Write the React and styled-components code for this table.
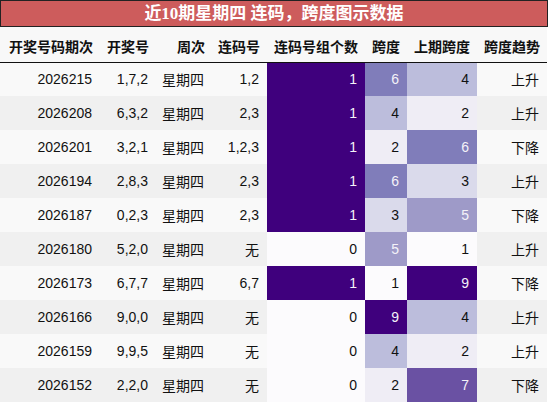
import React from "react";
import styled, { createGlobalStyle } from "styled-components";

const GlobalStyle = createGlobalStyle`
  html, body { margin: 0; padding: 0; background: #ffffff; }
  body { font-family: "Liberation Sans", "Noto Sans CJK SC", sans-serif; }
`;

const PURPLES = ["#fcfbfd", "#efedf5", "#dadaeb", "#bcbddc", "#9e9ac8", "#807dba", "#6a51a3", "#54278f", "#3f007d"];

const spanColor = (v) => PURPLES[Math.max(0, Math.min(8, v - 1))];
const spanText = (v) => (v >= 5 ? "#f4f2f8" : "#111");

const Wrapper = styled.div`
  width: 548px;
  display: flex;
  flex-direction: column;
`;

const Title = styled.div`
  height: 25px;
  border: 1px solid #222;
  background: #cd5c5c;
  color: #ffffff;
  font-family: "Liberation Serif", "Noto Sans CJK SC", serif;
  font-weight: bold;
  font-size: 17px;
  display: flex;
  align-items: center;
  justify-content: center;
  line-height: 1;
`;

const Table = styled.table`
  width: 547px;
  border-collapse: collapse;
  border-spacing: 0;
  table-layout: fixed;
  font-size: 14px;
  color: #111;
`;

const HeadCell = styled.th`
  height: 35px;
  padding: 4px 7px 0 0;
  box-sizing: border-box;
  background: #f8f8f8;
  border-bottom: 1px solid #111;
  text-align: right;
  font-weight: bold;
  white-space: nowrap;
  color: #111;
`;

const Row = styled.tr`
  background: ${(p) => (p.$odd ? "#f9f9f9" : "#f0f0f0")};
`;

const Cell = styled.td`
  height: 34px;
  padding: 0 8px 0 0;
  box-sizing: border-box;
  text-align: right;
  white-space: nowrap;
  background: ${(p) => p.$bg || "transparent"};
  color: ${(p) => p.$fg || "#111"};
`;

const COLS = [100, 56, 56, 55, 98, 42, 70, 70];
const HEAD = ["开奖号码期次", "开奖号", "周次", "连码号", "连码号组个数", "跨度", "上期跨度", "跨度趋势"];

const DATA = [
  ["2026215", "1,7,2", "星期四", "1,2", 1, 6, 4, "上升"],
  ["2026208", "6,3,2", "星期四", "2,3", 1, 4, 2, "上升"],
  ["2026201", "3,2,1", "星期四", "1,2,3", 1, 2, 6, "下降"],
  ["2026194", "2,8,3", "星期四", "2,3", 1, 6, 3, "上升"],
  ["2026187", "0,2,3", "星期四", "2,3", 1, 3, 5, "下降"],
  ["2026180", "5,2,0", "星期四", "无", 0, 5, 1, "上升"],
  ["2026173", "6,7,7", "星期四", "6,7", 1, 1, 9, "下降"],
  ["2026166", "9,0,0", "星期四", "无", 0, 9, 4, "上升"],
  ["2026159", "9,9,5", "星期四", "无", 0, 4, 2, "上升"],
  ["2026152", "2,2,0", "星期四", "无", 0, 2, 7, "下降"],
];

export default function App() {
  return (
    <Wrapper>
      <GlobalStyle />
      <Title>近10期星期四 连码，跨度图示数据</Title>
      <Table>
        <colgroup>
          {COLS.map((w, i) => (
            <col key={i} style={{ width: w }} />
          ))}
        </colgroup>
        <thead>
          <tr>
            {HEAD.map((h) => (
              <HeadCell key={h}>{h}</HeadCell>
            ))}
          </tr>
        </thead>
        <tbody>
          {DATA.map((r, i) => (
            <Row key={r[0]} $odd={i % 2 === 0}>
              <Cell>{r[0]}</Cell>
              <Cell>{r[1]}</Cell>
              <Cell>{r[2]}</Cell>
              <Cell>{r[3]}</Cell>
              <Cell $bg={r[4] ? "#3f007d" : "#fcfbfd"} $fg={r[4] ? "#f4f2f8" : "#111"}>
                {r[4]}
              </Cell>
              <Cell $bg={spanColor(r[5])} $fg={spanText(r[5])}>
                {r[5]}
              </Cell>
              <Cell $bg={spanColor(r[6])} $fg={spanText(r[6])}>
                {r[6]}
              </Cell>
              <Cell>{r[7]}</Cell>
            </Row>
          ))}
        </tbody>
      </Table>
    </Wrapper>
  );
}
